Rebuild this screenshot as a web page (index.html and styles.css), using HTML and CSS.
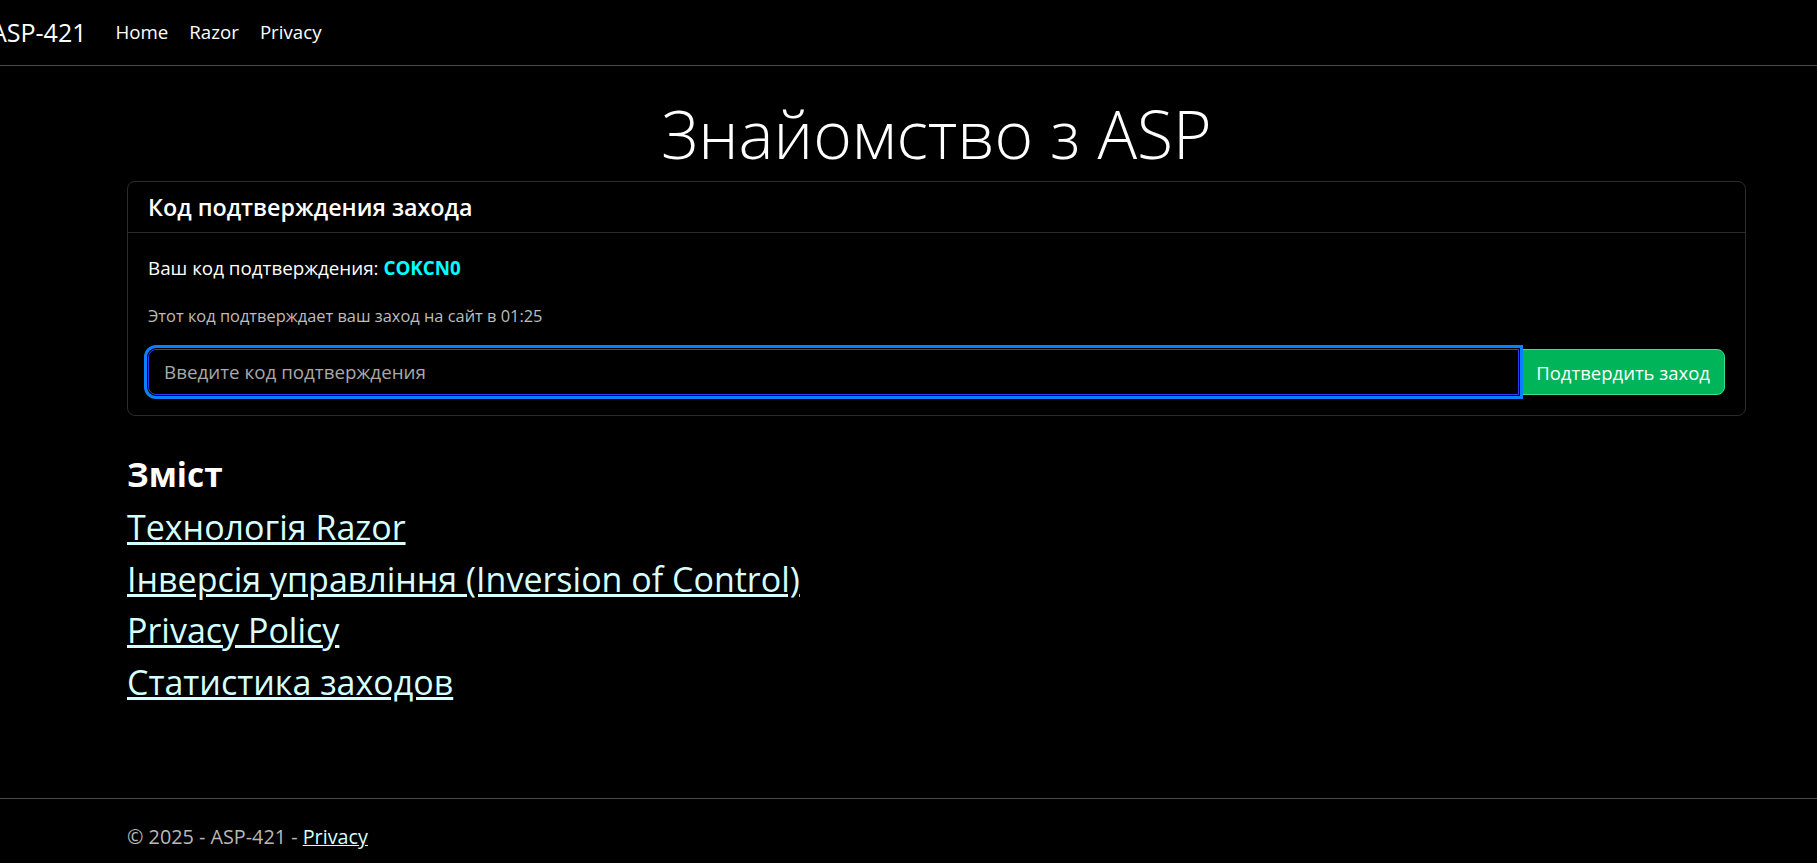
FILE: index.html
```html
<!DOCTYPE html>
<html lang="uk">
<head>
<meta charset="utf-8">
<title>ASP-421</title>
<link rel="stylesheet" href="styles.css">
</head>
<body>
<header class="navbar">
  <a class="brand" href="#">ASP-421</a>
  <nav class="nav-links">
    <a href="#">Home</a>
    <a href="#">Razor</a>
    <a href="#">Privacy</a>
  </nav>
</header>
<main class="container main">
  <h1 class="display">Знайомство з ASP</h1>
  <section class="card">
    <div class="card-header"><h5>Код подтверждения захода</h5></div>
    <div class="card-body">
      <p class="code-line">Ваш код подтверждения: <strong class="code">COKCN0</strong></p>
      <p class="muted">Этот код подтверждает ваш заход на сайт в 01:25</p>
      <form class="input-group" onsubmit="return false">
        <input class="code-input" type="text" placeholder="Введите код подтверждения" autofocus>
        <button class="btn-success" type="submit">Подтвердить заход</button>
      </form>
    </div>
  </section>
  <h3 class="toc-title">Зміст</h3>
  <h3 class="toc-item"><a href="#">Технологія Razor</a></h3>
  <h3 class="toc-item"><a href="#">Інверсія управління (Inversion of Control)</a></h3>
  <h3 class="toc-item"><a href="#">Privacy Policy</a></h3>
  <h3 class="toc-item"><a href="#">Статистика заходов</a></h3>
</main>
<footer class="footer">
  <div class="container">© 2025 - ASP-421 - <a href="#">Privacy</a></div>
</footer>
</body>
</html>
```

FILE: styles.css
```css
html, body {
  margin: 0;
  padding: 0;
  background: #000;
  color: #fff;
  font-family: "Open Sans", "Noto Sans", sans-serif;
  font-size: 20px;
  line-height: 1.5;
}

body {
  overflow: hidden;
}

a {
  color: #d6ffff;
}

/* navbar */
.navbar {
  height: 65px;
  border-bottom: 1px solid #4a4a4a;
  display: flex;
  align-items: center;
}

.brand {
  color: #fff;
  text-decoration: none;
  font-size: 25px;
  margin-left: -9px;
  margin-right: 18.5px;
  line-height: 1.5;
}

.nav-links {
  display: flex;
}

.nav-links a {
  color: #fff;
  text-decoration: none;
  padding: 10px 10.5px;
  font-size: 18.7px;
}

/* container */
.container {
  margin-left: 127px;
  width: 1619px;
}

.main {
  box-sizing: border-box;
  min-height: 732px;
  padding-top: 27.6px;
}

.display {
  margin: 0 0 8px 0;
  text-align: center;
  font-weight: 300;
  font-size: 66px;
  line-height: 1.2;
}

/* card */
.card {
  border: 1px solid #2c2c2c;
  border-radius: 8px;
}

.card-header {
  padding: 10px 20px;
  border-bottom: 1px solid #2c2c2c;
}

.card-header h5 {
  margin: 0;
  font-size: 23.3px;
  font-weight: 600;
  line-height: 30px;
}

.card-body {
  padding: 20px;
}

.code-line {
  margin: 0 0 20px 0;
  font-size: 18.8px;
  line-height: 30px;
}

.code {
  color: #00ffff;
  font-weight: 700;
}

.muted {
  margin: 0 0 20px 0;
  color: #bdbdbd;
  font-size: 16.4px;
  line-height: 26.25px;
}

.input-group {
  display: flex;
  margin: 0;
}

.code-input {
  flex: 1;
  min-width: 0;
  height: 46px;
  box-sizing: border-box;
  background: #000;
  color: #fff;
  caret-color: #fff;
  border: 1px solid #2a3cf5;
  border-radius: 8px 0 0 8px;
  padding: 7px 15px;
  font-family: inherit;
  font-size: 18.8px;
  outline: 3.5px solid #0a80ff;
  outline-offset: 1px;
  position: relative;
  z-index: 2;
}

.code-input:focus {
  outline: 3.5px solid #0a80ff;
  outline-offset: 1px;
}

.code-input::placeholder {
  color: #a8a8a8;
}

.btn-success {
  height: 46px;
  box-sizing: border-box;
  margin-left: 2px;
  background: #00b45a;
  border: 1px solid #3ae08e;
  border-radius: 0 8px 8px 0;
  color: #fff;
  padding: 7px 14px;
  font-family: inherit;
  font-size: 18.5px;
  white-space: nowrap;
}

/* table of contents */
.toc-title {
  margin: 38px 0 12.6px 0;
  font-size: 33.4px;
  font-weight: 700;
  line-height: 1.2;
}

.toc-item {
  margin: 0 0 11px 0;
  font-size: 34px;
  font-weight: 500;
  line-height: 1.2;
}

/* footer */
.footer {
  border-top: 1px solid #4a4a4a;
  line-height: 75px;
  height: 75px;
  color: #b8b8b8;
  font-size: 19.8px;
  white-space: nowrap;
}
```
